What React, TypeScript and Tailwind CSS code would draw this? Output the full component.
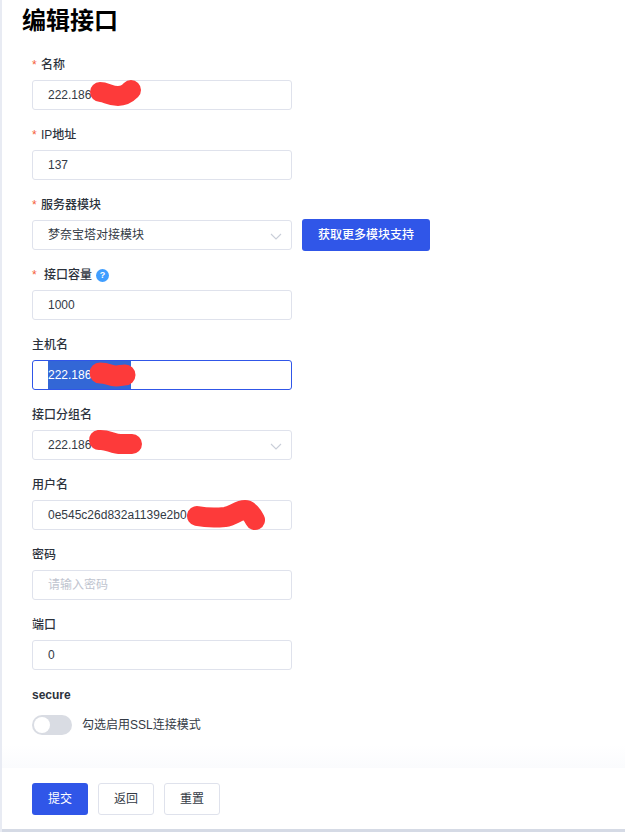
import React from "react";

const FONT = "font-['Liberation_Sans','Noto_Sans_CJK_SC',sans-serif]";

function Chevron() {
  return (
    <svg width="12" height="7" viewBox="0 0 12 7" fill="none" className="absolute left-[237px] top-[12px]">
      <path d="M1 1l5 5 5-5" stroke="#c9ced8" strokeWidth="1.1" />
    </svg>
  );
}

function Scribble({ d, w, left, top, sw }: { d: string; w: number; left: number; top: number; sw: number }) {
  return (
    <svg width={w} height="40" viewBox={`0 0 ${w} 40`} fill="none" className="absolute" style={{ left, top }}>
      <path d={d} stroke="#fd3a3a" strokeWidth={sw} strokeLinecap="round" strokeLinejoin="round" />
    </svg>
  );
}

function Label({ text, required, extraGap, help, bold }: { text: string; required?: boolean; extraGap?: boolean; help?: boolean; bold?: boolean }) {
  return (
    <div className={`h-5 flex items-center text-[12px] text-[#2c323c] leading-5 mb-[5px] ${bold ? "font-bold" : "font-medium"}`}>
      {required && <span className={`text-[#f5603a] font-normal w-[9px] ${extraGap ? "mr-[3px]" : ""}`}>*</span>}
      <span>{text}</span>
      {help && (
        <span className="ml-[4px] w-[13px] h-[13px] rounded-full bg-[#409eff] text-white text-[9px] font-bold flex items-center justify-center">?</span>
      )}
    </div>
  );
}

function Field({ label, required, extraGap, help, children, side }: { label: string; required?: boolean; extraGap?: boolean; help?: boolean; children: React.ReactNode; side?: React.ReactNode }) {
  return (
    <div className="h-[70px] pt-[15px]">
      <Label text={label} required={required} extraGap={extraGap} help={help} />
      <div className="flex items-center gap-[10px]">
        {children}
        {side}
      </div>
    </div>
  );
}

function Box({ children, select, focus }: { children?: React.ReactNode; select?: boolean; focus?: boolean }) {
  return (
    <div className={`relative w-[260px] h-[30px] rounded-[3px] border bg-white pl-[15px] flex items-center text-[12px] text-[#333a45] ${focus ? "border-[#3056e8]" : "border-[#dfe2ec]"}`}>
      {children}
      {select && <Chevron />}
    </div>
  );
}

export default function App() {
  return (
    <div className={`relative w-[625px] h-[832px] bg-white overflow-hidden border-l-2 border-[#e8ebf3] ${FONT}`}>
      <h1 className="pl-[20px] pt-[5px] h-[35px] text-[24px] leading-[32px] font-bold text-black">编辑接口</h1>

      <div className="pl-[30px] mt-[5px]">
        <Field label="名称" required>
          <Box>222.186</Box>
        </Field>
        <Field label="IP地址" required>
          <Box>137</Box>
        </Field>
        <Field
          label="服务器模块"
          required
          side={
            <button className="w-[128px] h-[32px] -my-px rounded-[3px] bg-[#3056e8] text-white text-[12px] font-medium">获取更多模块支持</button>
          }
        >
          <Box select>梦奈宝塔对接模块</Box>
        </Field>
        <Field label="接口容量" required extraGap help>
          <Box>1000</Box>
        </Field>
        <Field label="主机名">
          <Box focus>
            <span className="h-[28px] w-[83px] bg-[#3367d6] text-white flex items-center">222.186</span>
          </Box>
        </Field>
        <Field label="接口分组名">
          <Box select>222.186</Box>
        </Field>
        <Field label="用户名">
          <Box>0e545c26d832a1139e2b0</Box>
        </Field>
        <Field label="密码">
          <Box>
            <span className="text-[#c0c4cf]">请输入密码</span>
          </Box>
        </Field>
        <Field label="端口">
          <Box>0</Box>
        </Field>
        <div className="pt-[15px]">
          <Label text="secure" bold />
          <div className="flex items-center gap-[10px] mt-[10px]">
            <div className="w-[40px] h-[20px] rounded-full bg-[#d9dce3] p-[2px]">
              <div className="w-[16px] h-[16px] rounded-full bg-white" />
            </div>
            <span className="text-[12px] text-[#333a45]">勾选启用SSL连接模式</span>
          </div>
        </div>
      </div>

      <div className="absolute left-0 right-0 top-[745px] h-[23px] bg-gradient-to-b from-white to-[#fafbfd]" />
      <div className="absolute left-[30px] top-[783px] flex gap-[10px]">
        <button className="w-[56px] h-[32px] rounded-[3px] bg-[#3056e8] text-white text-[12px]">提交</button>
        <button className="w-[56px] h-[32px] rounded-[3px] bg-white border border-[#dfe2ec] text-[#333a45] text-[12px]">返回</button>
        <button className="w-[56px] h-[32px] rounded-[3px] bg-white border border-[#dfe2ec] text-[#333a45] text-[12px]">重置</button>
      </div>
      <div className="absolute left-0 right-0 bottom-0 h-[3px] bg-[#d5dae5]" />

      <Scribble w={70} left={83} top={73} sw={20} d="M15 19c6 0 10 4 18 4c6 0 9-2 13-6" />
      <Scribble w={70} left={80} top={355} sw={21} d="M18 18c8 0 10 3 16 3c4 0 6-1 9-1" />
      <Scribble w={70} left={82} top={423} sw={20} d="M15 17c8-1 14 4 22 4l11 0" />
      <Scribble w={100} left={178} top={491} sw={20} d="M17 25c10 2 18 2 28 1c8-1 13-7 20-7c4 0 8 6 10 10" />
    </div>
  );
}
